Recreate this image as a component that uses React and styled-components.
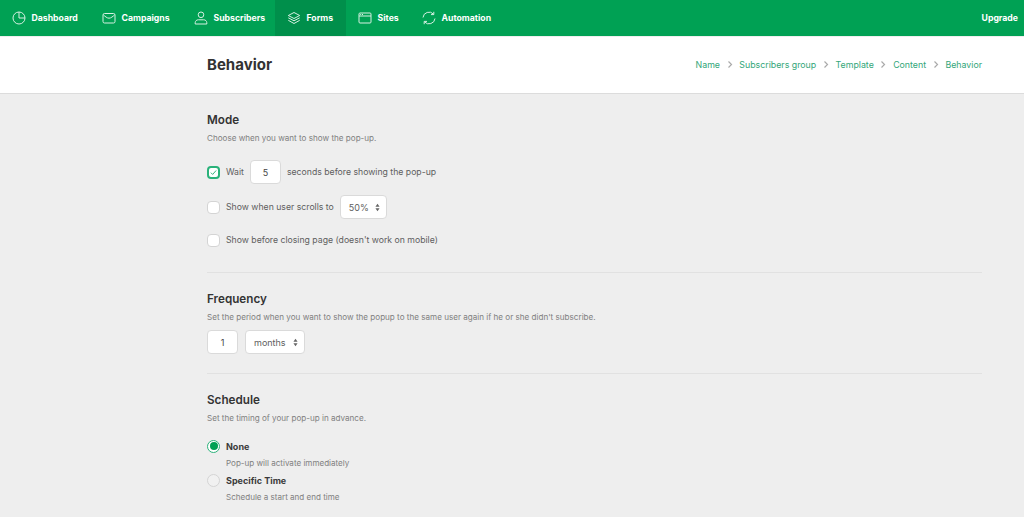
import React from 'react'
import styled, { createGlobalStyle } from 'styled-components'

const GlobalStyle = createGlobalStyle`
  html, body {
    margin: 0;
    padding: 0;
    background: #eeeeee;
    font-family: "Inter", "Liberation Sans", sans-serif;
    color: #3a3a3a;
  }
`

const TopBar = styled.nav`
  display: flex;
  justify-content: space-between;
  height: 36px;
  background: #00a154;
`
const NavList = styled.div`
  display: flex;
`
const NavItem = styled.a`
  display: flex;
  align-items: center;
  box-sizing: border-box;
  width: ${(p) => (p.$w ? `${p.$w}px` : 'auto')};
  gap: 6px;
  padding: 0 0 0 12px;
  color: #fff;
  font-size: 8.7px;
  font-weight: 700;
  white-space: nowrap;
  background: ${(p) => (p.$active ? '#008f4b' : 'transparent')};
  svg {
    width: 14px;
    height: 14px;
    margin-left: -0.5px;
    fill: none;
    stroke: #d6f0e2;
    stroke-width: 1;
  }
`
const Upgrade = styled(NavItem)`
  padding: 0 6px 0 0;
`
const Header = styled.header`
  box-sizing: border-box;
  height: 57px;
  margin-top: 1px;
  background: #fff;
  border-bottom: 1px solid #dcdcdc;
  padding: 0 42px 2px 207px;
  display: flex;
  align-items: center;
  justify-content: space-between;
`
const PageTitle = styled.h1`
  margin: 0;
  font-size: 15px;
  font-weight: 700;
  color: #333;
`
const Crumbs = styled.div`
  display: flex;
  align-items: center;
  gap: 6.7px;
  font-size: 8.8px;
  color: #33a679;
  svg {
    width: 6px;
    height: 7px;
    fill: none;
    stroke: #aaa;
    stroke-width: 1.2;
  }
`
const Main = styled.main`
  margin: 0 42px 0 207px;
`
const Section = styled.section`
  padding: ${(p) => p.$pad || '18px 0 0'};
  border-bottom: ${(p) => (p.$last ? 'none' : '1px solid #e1e1e1')};
`
const Heading = styled.h2`
  margin: 1px 0 0;
  font-size: 11.7px;
  line-height: 15px;
  font-weight: 600;
  color: #333;
`
const Help = styled.p`
  margin: 4px 0 0;
  font-size: 8.1px;
  line-height: 12px;
  color: #808080;
`
const Row = styled.div`
  display: flex;
  align-items: center;
  height: ${(p) => p.$h || 24}px;
  margin-top: ${(p) => p.$mt || 0}px;
  font-size: 8.7px;
  color: #5e5e5e;
`
const Check = styled.span`
  display: flex;
  align-items: center;
  justify-content: center;
  box-sizing: border-box;
  width: 13px;
  height: 13px;
  margin-right: 6px;
  border-radius: 4px;
  background: #fff;
  border: ${(p) => (p.$on ? '2px solid #2ab27a' : '1.5px solid #d4d4d4')};
  svg {
    width: 7px;
    height: 7px;
    fill: none;
    stroke: #1eaa6c;
    stroke-width: 1;
  }
`
const NumberBox = styled.span`
  display: flex;
  align-items: center;
  justify-content: center;
  box-sizing: border-box;
  width: 31px;
  height: 24px;
  margin: ${(p) => p.$margin || '0 6px'};
  background: #fff;
  border: 1.5px solid #dadada;
  border-radius: 4px;
  font-size: 9px;
  color: #444;
`
const SelectBox = styled.span`
  display: flex;
  align-items: center;
  justify-content: space-between;
  box-sizing: border-box;
  width: ${(p) => p.$w}px;
  height: 24px;
  margin-left: ${(p) => p.$ml || 0}px;
  padding: 0 6px 0 8px;
  background: #fff;
  border: 1.5px solid #dadada;
  border-radius: 4px;
  font-size: 9px;
  color: #5e5e5e;
  svg {
    width: 5px;
    height: 9px;
    fill: #666;
  }
`
const Radio = styled.span`
  display: flex;
  align-items: center;
  justify-content: center;
  box-sizing: border-box;
  width: 13px;
  height: 13px;
  margin-right: 6px;
  border-radius: 50%;
  background: ${(p) => (p.$on ? '#fff' : '#f1f1f1')};
  border: 1.5px solid ${(p) => (p.$on ? '#2ab27a' : '#d4d4d4')};
  &::after {
    content: '';
    display: ${(p) => (p.$on ? 'block' : 'none')};
    width: 8px;
    height: 8px;
    border-radius: 50%;
    background: #00a154;
  }
`
const RadioLabel = styled.span`
  font-size: 9px;
  font-weight: 700;
  color: #3a3a3a;
`
const RadioHelp = styled.p`
  margin: 3px 0 0 19px;
  font-size: 8.05px;
  line-height: 12px;
  color: #808080;
`

const icons = {
  Dashboard: (
    <svg viewBox="0 0 14 14">
      <circle cx="7" cy="7" r="6" />
      <path d="M7 1v6h6" />
    </svg>
  ),
  Campaigns: (
    <svg viewBox="0 0 14 14">
      <rect x="1" y="2.5" width="12" height="9.500" rx="1.500" />
      <path d="M1.500 4c1.500 1.300 3.500 3.200 5.500 3.200S11 5.300 12.500 4" />
    </svg>
  ),
  Subscribers: (
    <svg viewBox="0 0 14 14">
      <circle cx="7" cy="3.800" r="2.800" />
      <path d="M1.200 13v-1.300C1.200 10 2.600 8.800 4.300 8.800h5.400c1.700 0 3.100 1.200 3.100 2.900V13z" />
    </svg>
  ),
  Forms: (
    <svg viewBox="0 0 14 14">
      <path d="M7 1.500L1.300 4.500 7 7.500l5.700-3z" />
      <path d="M1.300 6.800L7 9.800l5.700-3" />
      <path d="M1.300 9.300L7 12.500l5.700-3.200" />
    </svg>
  ),
  Sites: (
    <svg viewBox="0 0 14 14">
      <rect x="1" y="2" width="12" height="10" rx="1" />
      <path d="M1 5h12" />
      <path d="M2.200 3.500h3.600" strokeDasharray="1 0.800" />
    </svg>
  ),
  Automation: (
    <svg viewBox="0 0 14 14">
      <path d="M1 6.500A6 6 0 0 1 11.500 3.200" />
      <path d="M11.800 .8v2.800H9" />
      <path d="M13 7.500A6 6 0 0 1 2.500 10.800" />
      <path d="M2.200 13.200v-2.800H5" />
    </svg>
  ),
}

const navItems = [
  { label: 'Dashboard', width: 90 },
  { label: 'Campaigns', width: 92 },
  { label: 'Subscribers', width: 93 },
  { label: 'Forms', width: 71 },
  { label: 'Sites', width: 64 },
  { label: 'Automation', width: 93 },
]
const crumbs = ['Name', 'Subscribers group', 'Template', 'Content', 'Behavior']

const Updown = () => (
  <svg viewBox="0 0 6 10">
    <path d="M3 .5L5.500 4H.5z" />
    <path d="M3 9.500L.5 6h5z" />
  </svg>
)

export default function App() {
  return (
    <>
      <GlobalStyle />
      <TopBar>
        <NavList>
          {navItems.map((item) => (
            <NavItem key={item.label} $w={item.width} $active={item.label === 'Forms'}>
              {icons[item.label]}
              {item.label}
            </NavItem>
          ))}
        </NavList>
        <Upgrade>Upgrade</Upgrade>
      </TopBar>
      <Header>
        <PageTitle>Behavior</PageTitle>
        <Crumbs>
          {crumbs.map((crumb, i) => (
            <React.Fragment key={crumb}>
              {i > 0 && (
                <svg viewBox="0 0 6 7">
                  <path d="M1.500 .5l3 3-3 3" />
                </svg>
              )}
              <span>{crumb}</span>
            </React.Fragment>
          ))}
        </Crumbs>
      </Header>
      <Main>
        <Section $pad="18px 0 20px">
          <Heading>Mode</Heading>
          <Help>Choose when you want to show the pop-up.</Help>
          <Row $mt={16}>
            <Check $on>
              <svg viewBox="0 0 8 8">
                <path d="M1 4.200l2 2 4-4.500" />
              </svg>
            </Check>
            Wait
            <NumberBox>5</NumberBox>
            seconds before showing the pop-up
          </Row>
          <Row $mt={11}>
            <Check />
            Show when user scrolls to
            <SelectBox $w={47} $ml={6}>
              50%
              <Updown />
            </SelectBox>
          </Row>
          <Row $mt={9}>
            <Check />
            Show before closing page (doesn't work on mobile)
          </Row>
        </Section>
        <Section $pad="18px 0 19px">
          <Heading>Frequency</Heading>
          <Help>Set the period when you want to show the popup to the same user again if he or she didn't subscribe.</Help>
          <Row $mt={7}>
            <NumberBox $margin="0 7px 0 0">1</NumberBox>
            <SelectBox $w={60}>
              months
              <Updown />
            </SelectBox>
          </Row>
        </Section>
        <Section $last $pad="18px 0 0">
          <Heading>Schedule</Heading>
          <Help>Set the timing of your pop-up in advance.</Help>
          <Row $mt={14} $h={16}>
            <Radio $on />
            <RadioLabel>None</RadioLabel>
          </Row>
          <RadioHelp>Pop-up will activate immediately</RadioHelp>
          <Row $mt={3} $h={16}>
            <Radio />
            <RadioLabel>Specific Time</RadioLabel>
          </Row>
          <RadioHelp>Schedule a start and end time</RadioHelp>
        </Section>
      </Main>
    </>
  )
}
